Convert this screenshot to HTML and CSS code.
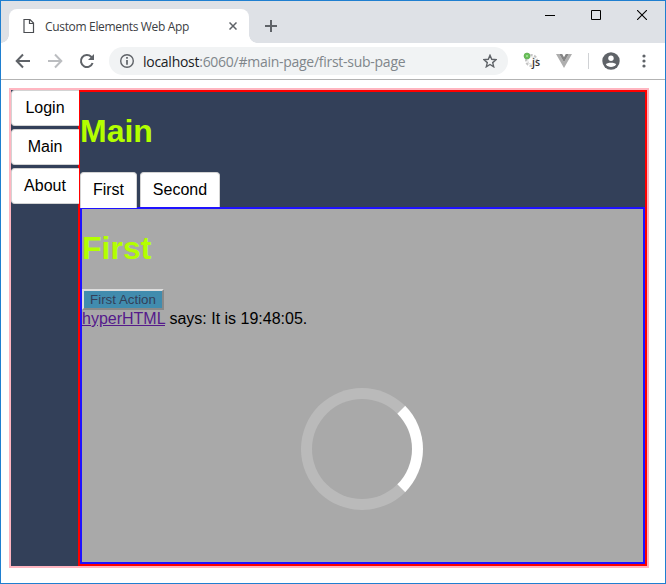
FILE: index.html
```html
<!DOCTYPE html>
<html lang="en">
<head>
<meta charset="utf-8">
<title>Custom Elements Web App</title>
<link rel="stylesheet" href="styles.css">
</head>
<body>
<div class="window">
  <header class="tabstrip">
    <span class="tab-curve"></span>
    <div class="browser-tab">
      <svg class="doc-icon" width="12" height="16" viewBox="0 0 12 16"><path d="M1 1.500h6l3.500 3.500v9.500H1z M6.500 1.500v4h4" fill="none" stroke="#4a4d51" stroke-width="1.200"/></svg>
      <span class="tab-title">Custom Elements Web App</span>
      <svg class="tab-close" width="8" height="8" viewBox="0 0 8 8"><path d="M.5.5l7 7M7.500.5l-7 7" stroke="#5f6368" stroke-width="1.500"/></svg>
    </div>
    <span class="tab-curve tab-curve-right"></span>
    <svg class="new-tab" width="12" height="12" viewBox="0 0 12 12"><path d="M6 0v12M0 6h12" stroke="#5f6368" stroke-width="2"/></svg>
    <div class="window-controls">
      <svg width="10" height="10" viewBox="0 0 10 10"><path d="M0 5.500h10" stroke="#000"/></svg>
      <svg width="10" height="10" viewBox="0 0 10 10"><path d="M.5.5h9v9h-9z" fill="none" stroke="#000"/></svg>
      <svg width="10" height="10" viewBox="0 0 10 10"><path d="M0 0l10 10M10 0L0 10" stroke="#000" stroke-width="1.100"/></svg>
    </div>
  </header>
  <nav class="toolbar">
    <svg class="nav-icon" width="16" height="16" viewBox="0 0 16 16"><path d="M15 8H2M8 1.500L1.700 8 8 14.500" fill="none" stroke="#5f6368" stroke-width="2"/></svg>
    <svg class="nav-icon" width="16" height="16" viewBox="0 0 16 16"><path d="M1 8h13M8 1.500L14.300 8 8 14.500" fill="none" stroke="#bbbdc0" stroke-width="2"/></svg>
    <svg class="nav-icon" width="16" height="16" viewBox="0 0 16 16"><path d="M13.600 10A6 6 0 1 1 12.200 3.800L14 5.600" fill="none" stroke="#5f6368" stroke-width="2"/><path d="M15 1v6H9z" fill="#5f6368"/></svg>
    <div class="omnibox">
      <svg width="14" height="14" viewBox="0 0 14 14"><circle cx="7" cy="7" r="6.300" fill="none" stroke="#5f6368" stroke-width="1.400"/><path d="M7 3v1.700M7 6v4.700" stroke="#5f6368" stroke-width="1.700"/></svg>
      <span class="url"><b>localhost</b>:6060/#main-page/first-sub-page</span>
      <svg class="star" width="14" height="14" viewBox="0 0 14 14"><path d="M7 1.300l1.700 4 4.300.4-3.300 2.900 1 4.200L7 10.500l-3.700 2.300 1-4.200L1 5.700l4.300-.4z" fill="none" stroke="#5f6368" stroke-width="1.400"/></svg>
    </div>
    <svg class="ext-js" width="18" height="18" viewBox="0 0 18 18"><circle cx="8.500" cy="8.500" r="5.500" fill="none" stroke="#c4c4c4" stroke-width="2" stroke-dasharray="2.500 1.500"/><circle cx="8.500" cy="8.500" r="3.800" fill="#fff" stroke="#ccc" stroke-width=".7"/><circle cx="4" cy="4" r="3" fill="#69bf58" stroke="#55a64a" stroke-width=".6"/><circle cx="4" cy="4" r="1" fill="#a7e49c"/><path d="M9 8h9v9H9z" fill="#fff" fill-opacity=".6"/><text x="9" y="14" class="js-label">js</text></svg>
    <svg class="ext-vue" width="16" height="14" viewBox="0 0 16 14"><path d="M0 0h3.200L8 8.300 12.800 0H16L8 14z" fill="#aeaeae"/><path d="M3.200 0h3L8 3.200 9.800 0h3L8 8.300z" fill="#858585"/></svg>
    <span class="separator"></span>
    <svg class="avatar" width="18" height="18" viewBox="0 0 18 18"><circle cx="9" cy="9" r="8.700" fill="#5f6368"/><circle cx="9" cy="6.300" r="2.700" fill="#fff"/><path d="M3.800 12.300C4.500 10.200 13.500 10.200 14.200 12.300A6.200 6.200 0 0 1 3.800 12.300z" fill="#fff"/></svg>
    <svg class="kebab" width="4" height="14" viewBox="0 0 4 14" fill="#5f6368"><circle cx="2" cy="2" r="1.600"/><circle cx="2" cy="7" r="1.600"/><circle cx="2" cy="12" r="1.600"/></svg>
  </nav>
  <main class="viewport">
    <div class="app">
      <nav class="sidebar">
        <button class="page-button">Login</button>
        <button class="page-button">Main</button>
        <button class="page-button">About</button>
      </nav>
      <section class="main-page">
        <h1>Main</h1>
        <nav class="sub-tabs">
          <button class="sub-tab active">First</button>
          <button class="sub-tab">Second</button>
        </nav>
        <section class="sub-page">
          <h1>First</h1>
          <button class="action">First Action</button>
          <p class="status"><a href="#">hyperHTML</a> says: It is 19:48:05.</p>
          <div class="spinner"></div>
        </section>
      </section>
    </div>
  </main>
</div>
</body>
</html>
```
FILE: styles.css
```css
* { box-sizing: border-box; }
body { margin: 0; font-family: "Liberation Sans", Arial, sans-serif; color: #000; }
svg { display: block; flex: none; }
button { font-family: inherit; margin: 0; }

.window {
  width: 666px;
  height: 584px;
  overflow: hidden;
  border: 1px solid #1f7fd0;
  background: #fff;
}

/* Browser frame */
.tabstrip { display: flex; height: 42px; background: #dee1e6; }
.tab-curve { width: 8px; height: 8px; margin-top: 34px; background: radial-gradient(circle at 0 0, #dee1e6 7.500px, #fff 8px); }
.tab-curve-right { background: radial-gradient(circle at 100% 0, #dee1e6 7.500px, #fff 8px); }
.browser-tab {
  display: flex;
  align-items: center;
  width: 240px;
  height: 34px;
  margin-top: 8px;
  padding: 0 12px 0 14px;
  border-radius: 8px 8px 0 0;
  background: #fff;
}
.tab-title { margin-left: 10px; font: 12px "Open Sans", "Noto Sans", sans-serif; color: #3c4043; white-space: nowrap; letter-spacing: -.33px; }
.tab-close { margin-left: auto; }
.new-tab { margin: 19px 0 0 8px; }
.window-controls { display: flex; gap: 36px; margin: 9px 18px 0 auto; }

.toolbar { display: flex; align-items: center; height: 37px; padding-left: 14px; border-bottom: 1px solid #b3b3b3; }
.nav-icon { margin-right: 16px; }
.omnibox {
  display: flex;
  align-items: center;
  width: 399px;
  height: 28px;
  margin-left: -2px;
  padding: 0 11px;
  border-radius: 14px;
  background: #f1f3f4;
}
.url { margin-left: 9px; font: 14px "Open Sans", "Noto Sans", sans-serif; color: #80868b; letter-spacing: -.27px; white-space: nowrap; }
.url b { font-weight: normal; color: #202124; }
.star { margin-left: auto; }
.ext-js { margin-left: 15px; }
.js-label { font: 600 10.500px "Open Sans", sans-serif; fill: #333; }
.ext-vue { margin-left: 15px; }
.separator { width: 1px; height: 16px; margin-left: 16px; background: #d0d2d5; }
.avatar { margin-left: 13px; }
.kebab { margin-left: 22px; }

/* Page */
.viewport { padding: 8px; }
.app { display: flex; width: 640px; height: 480px; border: 2px solid #ffb6c1; background: #334059; }
.sidebar { display: flex; flex-direction: column; gap: 3px; width: 67px; }
.page-button {
  position: relative;
  width: 68px;
  height: 36px;
  padding: 0 1px 0 0;
  border: 1px solid #d3d3d3;
  border-right: 0;
  border-radius: 4px 0 0 4px;
  background: #fff;
  color: #000;
  font-size: 16px;
}
.main-page { display: flex; flex-direction: column; flex: 1; border: 2px solid #f00; }
h1 { margin: 21px 0; font-size: 32px; line-height: 37px; color: #b3ff00; }
.main-page > h1 { margin-bottom: 22px; }
.sub-tabs { display: flex; gap: 3px; height: 35px; }
.sub-tab {
  position: relative;
  width: 57px;
  height: 35px;
  padding: 0;
  border: 1px solid #d3d3d3;
  border-bottom: 0;
  border-radius: 4px 4px 0 0;
  background: #fff;
  color: #000;
  font-size: 16px;
}
.sub-tab:last-child { width: 80px; }
.sub-tab.active { height: 36px; padding-bottom: 1px; }
.sub-page { flex: 1; border: 2px solid #1f12ff; background: #a9a9a9; }
.sub-page h1 { margin: 21px 0 22px; }
.action {
  display: block;
  width: 82px;
  height: 21px;
  padding: 0;
  border: 2px outset #ddd;
  background: #418cae;
  color: #334059;
  font-size: 13.330px;
}
.status { margin: 0; font-size: 16px; line-height: 18px; }
.status a { color: #551a8b; }
.spinner {
  width: 122px;
  height: 122px;
  margin: 60px 0 0 219px;
  border: 11px solid rgba(255, 255, 255, .2);
  border-right-color: #fff;
  border-radius: 50%;
}
```
